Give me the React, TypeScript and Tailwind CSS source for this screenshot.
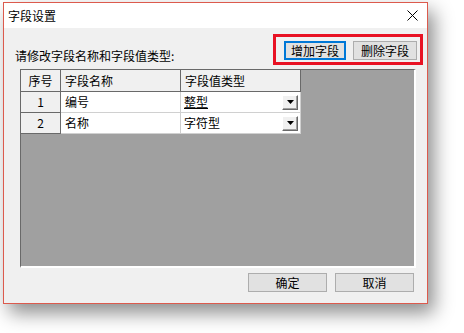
import React from "react";

const cjk = "font-['Microsoft_YaHei','Noto_Sans_CJK_SC',sans-serif]";

const DropButton = () => (
  <div className="w-[16px] h-[15px] mr-[2px] flex items-center justify-center bg-[#f0f0f0] border-t border-l border-t-white border-l-white border-b border-r border-b-[#696969] border-r-[#696969] shadow-[inset_-1px_-1px_0_#a0a0a0]">
    <svg width="7" height="4" viewBox="0 0 7 4">
      <path d="M0 0h7L3.5 4z" fill="#000" />
    </svg>
  </div>
);

const rows = [
  { no: "1", name: "编号", type: "整型", focus: true },
  { no: "2", name: "名称", type: "字符型", focus: false },
];

export default function App() {
  return (
    <div className={`w-[464px] h-[333px] bg-white pt-[2px] pl-[3px] text-[12px] text-black ${cjk}`}>
      <div className="w-[425px] h-[302px] border border-[#dc5a4d] bg-[#f0f0f0] flex flex-col shadow-[6px_9px_18px_rgba(0,0,0,0.45)]">
        {/* title bar */}
        <div className="h-[25px] bg-white flex items-center justify-between pl-[4px] pr-[9px]">
          <span className="leading-[14px]">字段设置</span>
          <svg width="11" height="11" viewBox="0 0 11 11">
            <path d="M0.5 0.5L10.5 10.5M10.5 0.5L0.5 10.5" stroke="#000" strokeWidth="1" />
          </svg>
        </div>

        <div className="flex-1 flex flex-col">
          <div className="flex items-end justify-between pl-[11px] pr-[4px] pt-[6px]">
            <span className="leading-[14px] mb-[2px]">请修改字段名称和字段值类型:</span>
            <div className="flex gap-[7px] border-[3px] border-[#e81123] pl-[8px] pr-[3px] pt-[4px] pb-[2px]">
              <button className="w-[62px] h-[19px] border-2 border-[#0078d7] bg-[#e1e1e1] flex items-center justify-center leading-[14px]">
                增加字段
              </button>
              <button className="w-[64px] h-[19px] border border-[#adadad] bg-[#e1e1e1] flex items-center justify-center leading-[14px]">
                删除字段
              </button>
            </div>
          </div>

          {/* grid */}
          <div className="ml-[16px] mt-[4px] w-[396px] h-[199px] bg-[#a0a0a0] border-l border-t border-l-[#696969] border-t-[#696969] border-r-2 border-b-2 border-r-white border-b-white">
            <div className="flex w-[280px] h-[22px] leading-[14px]">
              <div className="w-[40px] bg-[#f0f0f0] border-r border-b border-[#696969] flex items-center justify-center">序号</div>
              <div className="w-[120px] bg-[#f0f0f0] border-r border-b border-[#696969] flex items-center pl-[4px]">字段名称</div>
              <div className="w-[120px] bg-[#f0f0f0] border-r border-b border-[#696969] flex items-center pl-[4px]">字段值类型</div>
            </div>
            {rows.map((r) => (
              <div key={r.no} className="flex w-[280px] h-[21px] leading-[14px]">
                <div className="w-[40px] bg-[#f0f0f0] border-r border-b border-[#696969] flex items-center justify-center">{r.no}</div>
                <div className="w-[120px] bg-white border-r border-b border-[#d0d0d0] flex items-center pl-[4px]">{r.name}</div>
                <div className="w-[120px] bg-white border-r border-b border-[#d0d0d0] flex items-center justify-between pl-[3px]">
                  <span className={r.focus ? "underline" : ""}>{r.type}</span>
                  <DropButton />
                </div>
              </div>
            ))}
          </div>

          <div className="flex justify-end gap-[8px] pr-[13px] mt-[5px]">
            <button className="w-[79px] h-[19px] border border-[#adadad] bg-[#e1e1e1] flex items-center justify-center leading-[14px]">
              确定
            </button>
            <button className="w-[79px] h-[19px] border border-[#adadad] bg-[#e1e1e1] flex items-center justify-center leading-[14px]">
              取消
            </button>
          </div>
        </div>
      </div>
    </div>
  );
}
